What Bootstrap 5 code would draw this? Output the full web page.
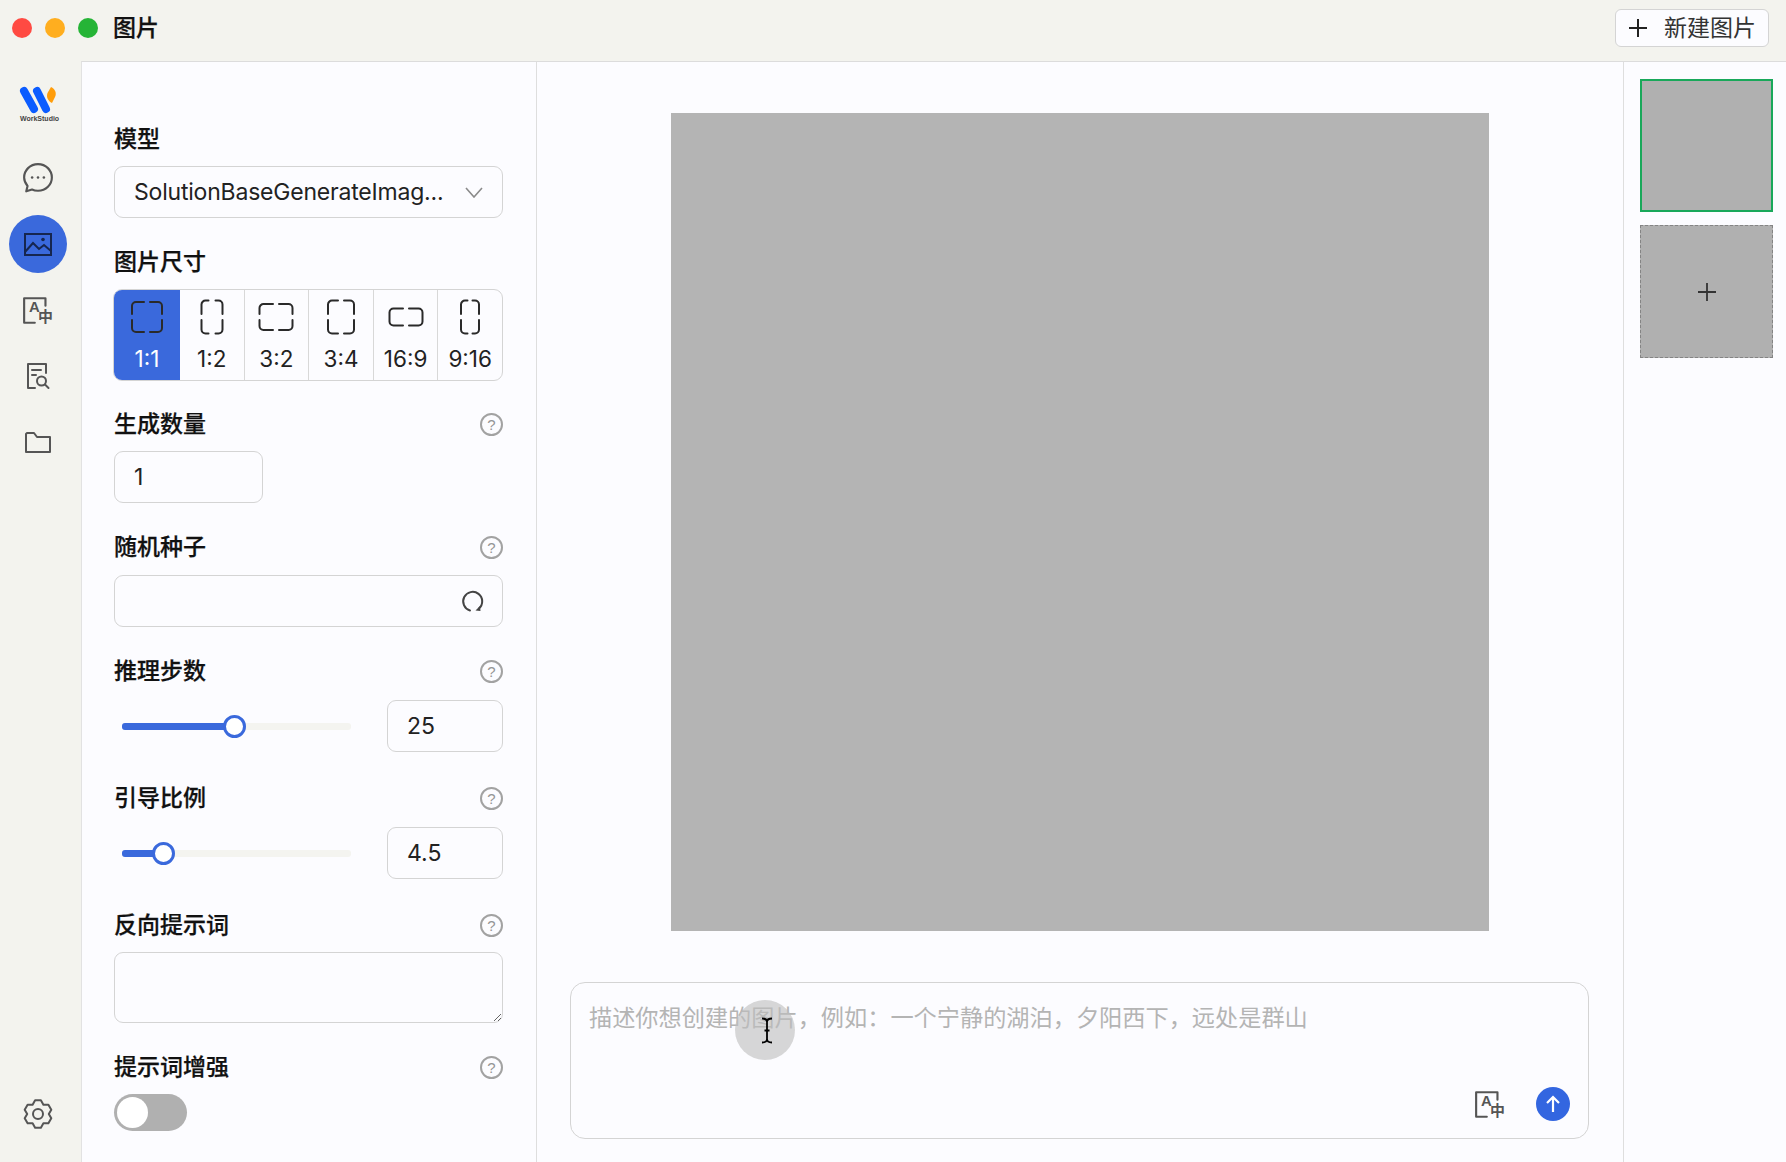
<!DOCTYPE html>
<html lang="zh-CN">
<head>
    <meta charset="UTF-8">
    <meta name="viewport" content="width=device-width, initial-scale=1.0">
    <title>WorkStudio - 图片</title>
    <link href="https://cdn.jsdelivr.net/npm/bootstrap@5.3.3/dist/css/bootstrap.min.css" rel="stylesheet">
    <style>
        html, body { height: 100%; }
        body { background: #f3f3ee; color: #222; font-family: Inter, "Noto Sans CJK SC", sans-serif; font-size: 23px; overflow: hidden; }

        .title-bar { height: 61px; padding: 0 17px 5px 0; }
        .win-dot { width: 20px; height: 20px; border-radius: 50%; margin-right: 13px; }
        .win-dots { padding-left: 12px; width: 113px; }
        .app-title { font-weight: 500; -webkit-text-stroke: .25px #111; color: #111; line-height: 1; }
        .new-btn { height: 38px; padding: 0 12px; gap: 16px; font-size: 23px; line-height: 1; color: #333; background: #fcfcff; border: 1px solid #d4d4d4; border-radius: 6px; }

        .app-body { height: 1101px; }
        .side-rail { width: 81px; padding: 24px 0 19px 9px; }
        .rail-logo { width: 58px; height: 40px; margin-bottom: 24px; }
        .logo-word { font: 700 7px "Liberation Sans", sans-serif; fill: #444; }
        .rail-item { width: 58px; height: 58px; margin-bottom: 8px; border-radius: 50%; }
        .rail-item:last-child { margin-bottom: 0; }
        .rail-item.on { background: #3a69dc; }
        .ico-line { fill: none; stroke: #555; stroke-width: 2; stroke-linecap: round; stroke-linejoin: round; }
        .ico-cjk { font: 600 14px "Noto Sans CJK SC", sans-serif; fill: #555; }
        .ico-lat { font: 600 14px "Liberation Sans", sans-serif; fill: #555; }

        .work-area { background: #fcfcff; border-top: 1px solid #dcdcdc; border-left: 1px solid #e2e2e2; min-width: 0; }
        .form-pane { width: 455px; padding: 61px 33px 0 32px; border-right: 1px solid #dedede; flex-shrink: 0; }
        .fld-label { height: 32px; margin-bottom: 11px; font-weight: 500; -webkit-text-stroke: .25px #111; color: #111; line-height: 32px; }
        .fld-block { margin-bottom: 28px; }
        .fld-block.up-one { margin-bottom: 27px; }
        .fld-block.gap-12 .fld-label { margin-bottom: 12px; }
        .fld-block.tight-label .fld-label { margin-bottom: 13px; }
        .fld-block.wide-gap { margin-bottom: 30px; }
        .help-ico { width: 23px; height: 23px; border: 2px solid #a2a2a2; border-radius: 50%; color: #959595; font-size: 15px; line-height: 1; font-family: "Liberation Sans", sans-serif; -webkit-text-stroke: 0; }

        .form-pane .form-control, .picker-box { height: 52px; padding: 0 19px; font-size: 23px; color: #222; background-color: #fcfcff; border: 1px solid #d4d4d4; border-radius: 9px; box-shadow: none; }
        .form-pane textarea.form-control { height: 71px; }
        .picker-text { white-space: nowrap; overflow: hidden; letter-spacing: -.2px; }
        .seed-box { position: relative; }
        .seed-box .form-control { padding-right: 60px; }
        .seed-spin { position: absolute; right: 19px; top: 14px; }
        .count-input { width: 149px !important; }
        .step-input { width: 116px !important; flex-shrink: 0; }

        .ratio-group { height: 92px; margin-left: -1px; border: 1px solid #d4d4d4; border-radius: 9px; overflow: hidden; }
        .ratio-opt { flex: 1 1 0; padding-top: 9px; border-right: 1px solid #d8d8d8; font-size: 22.5px; line-height: 1; color: #222; }
        .ratio-opt:last-child { border-right: 0; }
        .ratio-opt svg { margin-bottom: 13px; }
        .ratio-opt.on { background: #3a69dc; color: #fff; border-right: 0; flex: 0 0 66px; }
        .ratio-path { fill: none; stroke: #2a2a2a; stroke-width: 2; stroke-linecap: round; }

        .slide-wrap { width: 229px; height: 7px; margin: 0 36px 0 8px; background: #f4f4f0; border-radius: 3px; position: relative; flex-shrink: 0; }
        .slide-fill { height: 100%; background: #3a69dc; border-radius: 3px; }
        .slide-thumb { position: absolute; top: 50%; width: 23px; height: 23px; margin: -11.5px 0 0 -11.5px; background: #fff; border: 3.5px solid #3a69dc; border-radius: 50%; }

        .switch-pill { width: 73px; height: 37px; padding: 3px; background: #b0b0b0; border-radius: 19px; }
        .switch-knob { width: 31px; height: 31px; background: #fff; border-radius: 50%; }

        .canvas-pane { padding: 51px 34px 23px 33px; min-width: 0; }
        .result-img { width: 818px; height: 818px; background: #b4b4b4; margin: 0 auto 51px; flex-shrink: 0; }
        .prompt-box { height: 157px; border: 1px solid #d4d4d4; border-radius: 15px; padding: 18px 18px 17px 18px; position: relative; }
        .prompt-input { flex: 1 1 auto; padding: 0; border: 0; outline: 0; resize: none; background: transparent; font-size: 23.2px; line-height: 34px; color: #222; }
        .prompt-input::placeholder { color: #b4b4b4; opacity: 1; }
        .prompt-tools { gap: 30px; padding-right: 0; }
        .send-btn { width: 34px; height: 34px; background: #3366e0; border-radius: 50%; }
        .tap-spot { position: absolute; left: 164px; top: 17px; width: 60px; height: 60px; border-radius: 50%; background: rgba(190, 190, 190, .62); pointer-events: none; }
        .tap-spot svg { position: absolute; left: 26px; top: 17px; }

        .thumb-pane { width: 163px; padding: 17px 13px 0 16px; border-left: 1px solid #dedede; flex-shrink: 0; }
        .thumb-item { width: 133px; height: 133px; background: #b0b0b0; margin-bottom: 13px; }
        .thumb-item.on { border: 2px solid #19a85a; }
        .thumb-item.add { border: 1px dashed #848484; }
    </style>
</head>
<body>

<!-- Title bar -->
<div class="title-bar d-flex align-items-center">
    <div class="win-dots d-flex">
        <span class="win-dot" style="background:#ff4a42"></span>
        <span class="win-dot" style="background:#ffae1f"></span>
        <span class="win-dot mx-0" style="background:#25b436"></span>
    </div>
    <div class="app-title">图片</div>
    <button type="button" class="btn new-btn d-flex align-items-center ms-auto">
        <svg width="20" height="20" viewBox="0 0 20 20"><path d="M10 1V19M1 10H19" stroke="#222" stroke-width="2" fill="none"/></svg>
        新建图片
    </button>
</div>

<div class="app-body d-flex">

    <!-- Left rail -->
    <nav class="side-rail d-flex flex-column flex-shrink-0">
        <div class="rail-logo">
            <svg width="58" height="40" viewBox="0 0 58 40">
                <path d="M15 6L25 24M28 6L37 24" stroke="#0b5cff" stroke-width="8" stroke-linecap="round" fill="none"/>
                <path d="M42 2C46 4 48 8 46 12L43 18C39 16 37 12 38.500 8Z" fill="#ff9d0a"/>
                <text x="11" y="36" class="logo-word">WorkStudio</text>
            </svg>
        </div>
        <div class="rail-item d-flex align-items-center justify-content-center">
            <svg width="32" height="32" viewBox="0 0 30 30">
                <path class="ico-line" d="M15 2C22.500 2 28 7.800 28 14.500S22.500 27 15 27c-2 0-4-.4-5.600-1.200L4 27.500l1.200-5C3.400 20.300 2 17.500 2 14.500 2 7.800 7.500 2 15 2z"/>
                <circle cx="9.500" cy="14.500" r="1.200" fill="#555"/><circle cx="15" cy="14.500" r="1.200" fill="#555"/><circle cx="20.500" cy="14.500" r="1.200" fill="#555"/>
            </svg>
        </div>
        <div class="rail-item on d-flex align-items-center justify-content-center">
            <svg width="28" height="23" viewBox="0 0 28 23">
                <rect x="1" y="1" width="26" height="21" fill="none" stroke="#16264f" stroke-width="2"/>
                <path d="M1 19L9 10L15 16L20 12L27 18" fill="none" stroke="#16264f" stroke-width="2"/>
                <circle cx="19" cy="6.500" r="1.800" fill="#16264f"/>
            </svg>
        </div>
        <div class="rail-item d-flex align-items-center justify-content-center">
            <svg width="32" height="29" viewBox="0 0 30 27">
                <path class="ico-line" d="M12 25H2V2H22V9"/>
                <text x="6.500" y="15" class="ico-lat">A</text>
                <text x="15" y="24" class="ico-cjk">中</text>
            </svg>
        </div>
        <div class="rail-item d-flex align-items-center justify-content-center">
            <svg width="24" height="28" viewBox="0 0 24 28">
                <path class="ico-line" d="M9 26H2V2H20V11M6 8H15M6 13H10"/>
                <circle class="ico-line" cx="15.500" cy="19" r="4.500"/>
                <path class="ico-line" d="M19 22.500L22.500 26"/>
            </svg>
        </div>
        <div class="rail-item d-flex align-items-center justify-content-center">
            <svg width="26" height="21" viewBox="0 0 26 21">
                <path class="ico-line" d="M1 2V20H25V5H12L9 1H2Z"/>
            </svg>
        </div>
        <div class="rail-item d-flex align-items-center justify-content-center mt-auto">
            <svg width="30" height="30" viewBox="0 0 30 30">
                <path class="ico-line" d="M17.900 1.300L20.400 5.650L25.400 5.630L28.300 10.670L25.800 15L28.300 19.330L25.400 24.370L20.400 24.350L17.900 28.700H12.100L9.600 24.350L4.600 24.370L1.700 19.330L4.200 15L1.700 10.670L4.600 5.630L9.600 5.650L12.100 1.300Z"/>
                <circle class="ico-line" cx="15" cy="15" r="5"/>
            </svg>
        </div>
    </nav>

    <div class="work-area d-flex flex-grow-1">

        <!-- Settings form -->
        <div class="form-pane">
            <div class="fld-block">
                <div class="fld-label">模型</div>
                <div class="picker-box d-flex align-items-center justify-content-between">
                    <span class="picker-text">SolutionBaseGenerateImag...</span>
                    <svg width="18" height="11" viewBox="0 0 18 11" class="flex-shrink-0"><path d="M1 1L9 10L17 1" fill="none" stroke="#8a8a8a" stroke-width="1.600"/></svg>
                </div>
            </div>

            <div class="fld-block up-one">
                <div class="fld-label">图片尺寸</div>
                <div class="ratio-group d-flex">
                    <div class="ratio-opt on d-flex flex-column align-items-center">
                        <svg width="36" height="36" viewBox="0 0 36 36"><path class="ratio-path" d="M15 3H7A4 4 0 0 0 3 7V15M21 3H29A4 4 0 0 1 33 7V15M3 21V29A4 4 0 0 0 7 33H15M33 21V29A4 4 0 0 1 29 33H21"/></svg>
                        1:1
                    </div>
                    <div class="ratio-opt d-flex flex-column align-items-center">
                        <svg width="36" height="36" viewBox="0 0 36 36"><path class="ratio-path" d="M14.500 1.500H11.500A4 4 0 0 0 7.500 5.500V15M21.500 1.500H24.500A4 4 0 0 1 28.500 5.500V15M7.500 21V30.500A4 4 0 0 0 11.500 34.500H14.500M28.500 21V30.500A4 4 0 0 1 24.500 34.500H21.500"/></svg>
                        1:2
                    </div>
                    <div class="ratio-opt d-flex flex-column align-items-center">
                        <svg width="36" height="36" viewBox="0 0 36 36"><path class="ratio-path" d="M15 5H5.500A4 4 0 0 0 1.500 9V15M21 5H30.500A4 4 0 0 1 34.500 9V15M1.500 21V27A4 4 0 0 0 5.500 31H15M34.500 21V27A4 4 0 0 1 30.500 31H21"/></svg>
                        3:2
                    </div>
                    <div class="ratio-opt d-flex flex-column align-items-center">
                        <svg width="36" height="36" viewBox="0 0 36 36"><path class="ratio-path" d="M15 1.500H9A4 4 0 0 0 5 5.500V15M21 1.500H27A4 4 0 0 1 31 5.500V15M5 21V30.500A4 4 0 0 0 9 34.500H15M31 21V30.500A4 4 0 0 1 27 34.500H21"/></svg>
                        3:4
                    </div>
                    <div class="ratio-opt d-flex flex-column align-items-center">
                        <svg width="36" height="36" viewBox="0 0 36 36"><path class="ratio-path" d="M15 9.500H5.500A4 4 0 0 0 1.500 13.500V22.500A4 4 0 0 0 5.500 26.500H15M21 9.500H30.500A4 4 0 0 1 34.500 13.500V22.500A4 4 0 0 1 30.500 26.500H21"/></svg>
                        16:9
                    </div>
                    <div class="ratio-opt d-flex flex-column align-items-center">
                        <svg width="36" height="36" viewBox="0 0 36 36"><path class="ratio-path" d="M15.500 1.500H13A4 4 0 0 0 9 5.500V15M20.500 1.500H23A4 4 0 0 1 27 5.500V15M9 21V30.500A4 4 0 0 0 13 34.500H15.500M27 21V30.500A4 4 0 0 1 23 34.500H20.500"/></svg>
                        9:16
                    </div>
                </div>
            </div>

            <div class="fld-block">
                <div class="fld-label d-flex align-items-center justify-content-between">生成数量 <span class="help-ico d-flex align-items-center justify-content-center">?</span></div>
                <input type="text" class="form-control count-input" value="1">
            </div>

            <div class="fld-block gap-12">
                <div class="fld-label d-flex align-items-center justify-content-between">随机种子 <span class="help-ico d-flex align-items-center justify-content-center">?</span></div>
                <div class="seed-box">
                    <input type="text" class="form-control">
                    <svg class="seed-spin" width="24" height="24" viewBox="0 0 24 24"><path d="M10 21.500A9.500 9.500 0 1 1 19 19.500" fill="none" stroke="#444" stroke-width="2" stroke-linecap="round"/><path d="M15.500 21.500L20.500 22L20 17Z" fill="#444"/></svg>
                </div>
            </div>

            <div class="fld-block tight-label wide-gap">
                <div class="fld-label d-flex align-items-center justify-content-between">推理步数 <span class="help-ico d-flex align-items-center justify-content-center">?</span></div>
                <div class="d-flex align-items-center">
                    <div class="slide-wrap">
                        <div class="slide-fill" style="width:49.3%"></div>
                        <div class="slide-thumb" style="left:49.3%"></div>
                    </div>
                    <input type="text" class="form-control step-input" value="25">
                </div>
            </div>

            <div class="fld-block tight-label wide-gap">
                <div class="fld-label d-flex align-items-center justify-content-between">引导比例 <span class="help-ico d-flex align-items-center justify-content-center">?</span></div>
                <div class="d-flex align-items-center">
                    <div class="slide-wrap">
                        <div class="slide-fill" style="width:18.3%"></div>
                        <div class="slide-thumb" style="left:18.3%"></div>
                    </div>
                    <input type="text" class="form-control step-input" value="4.5">
                </div>
            </div>

            <div class="fld-block">
                <div class="fld-label d-flex align-items-center justify-content-between">反向提示词 <span class="help-ico d-flex align-items-center justify-content-center">?</span></div>
                <textarea class="form-control"></textarea>
            </div>

            <div>
                <div class="fld-label d-flex align-items-center justify-content-between">提示词增强 <span class="help-ico d-flex align-items-center justify-content-center">?</span></div>
                <div class="switch-pill"><div class="switch-knob"></div></div>
            </div>
        </div>

        <!-- Canvas and prompt -->
        <div class="canvas-pane d-flex flex-column flex-grow-1">
            <div class="result-img"></div>
            <div class="prompt-box d-flex flex-column">
                <textarea class="prompt-input" placeholder="描述你想创建的图片，例如：一个宁静的湖泊，夕阳西下，远处是群山"></textarea>
                <div class="prompt-tools d-flex align-items-center justify-content-end">
                    <svg width="32" height="29" viewBox="0 0 30 27">
                        <path class="ico-line" d="M12 25H2V2H22V9"/>
                        <text x="6.500" y="15" class="ico-lat">A</text>
                        <text x="15" y="24" class="ico-cjk">中</text>
                    </svg>
                    <div class="send-btn d-flex align-items-center justify-content-center">
                        <svg width="16" height="18" viewBox="0 0 16 18"><path d="M8 17V2M2 8L8 2L14 8" fill="none" stroke="#fff" stroke-width="2.200"/></svg>
                    </div>
                </div>
                <div class="tap-spot">
                    <svg width="12" height="27" viewBox="0 0 12 27"><path d="M1 1.500C4 1.500 6 3 6 5V22C6 24 4 25.500 1 25.500M11 1.500C8 1.500 6 3 6 5V22C6 24 8 25.500 11 25.500M3.500 13.500H8.500" fill="none" stroke="#000" stroke-width="1.800"/></svg>
                </div>
            </div>
        </div>

        <!-- Thumbnails -->
        <div class="thumb-pane">
            <div class="thumb-item on"></div>
            <div class="thumb-item add d-flex align-items-center justify-content-center">
                <svg width="20" height="20" viewBox="0 0 20 20"><path d="M10 1V19M1 10H19" stroke="#333" stroke-width="1.800" fill="none"/></svg>
            </div>
        </div>
    </div>
</div>

<script src="https://cdn.jsdelivr.net/npm/bootstrap@5.3.3/dist/js/bootstrap.bundle.min.js"></script>
</body>
</html>
